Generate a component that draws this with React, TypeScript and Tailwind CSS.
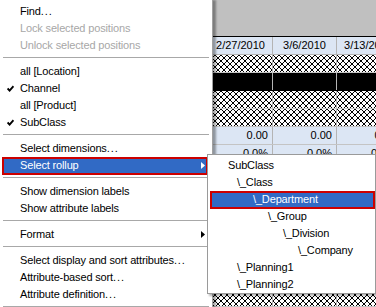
import React from "react";

type Entry =
  | {
      kind: "item";
      label: string;
      disabled?: boolean;
      checked?: boolean;
      submenu?: boolean;
      active?: boolean;
    }
  | { kind: "sep" };

const mainMenu: Entry[] = [
  { kind: "item", label: "Find..." },
  { kind: "item", label: "Lock selected positions", disabled: true },
  { kind: "item", label: "Unlock selected positions", disabled: true },
  { kind: "sep" },
  { kind: "item", label: "all [Location]" },
  { kind: "item", label: "Channel", checked: true },
  { kind: "item", label: "all [Product]" },
  { kind: "item", label: "SubClass", checked: true },
  { kind: "sep" },
  { kind: "item", label: "Select dimensions..." },
  { kind: "item", label: "Select rollup", submenu: true, active: true },
  { kind: "sep" },
  { kind: "item", label: "Show dimension labels" },
  { kind: "item", label: "Show attribute labels" },
  { kind: "sep" },
  { kind: "item", label: "Format", submenu: true },
  { kind: "sep" },
  { kind: "item", label: "Select display and sort attributes..." },
  { kind: "item", label: "Attribute-based sort..." },
  { kind: "item", label: "Attribute definition..." },
  { kind: "sep" },
  { kind: "item", label: "Print..." },
];

const rollups = [
  { label: "SubClass", indent: "pl-[20px]" },
  { label: "\\_Class", indent: "pl-[29px]" },
  { label: "\\_Department", indent: "pl-[45px]", active: true },
  { label: "\\_Group", indent: "pl-[60px]" },
  { label: "\\_Division", indent: "pl-[75px]" },
  { label: "\\_Company", indent: "pl-[90px]" },
  { label: "\\_Planning1", indent: "pl-[29px]" },
  { label: "\\_Planning2", indent: "pl-[29px]" },
];

const dates = ["2/20/2010", "2/27/2010", "3/6/2010", "3/13/2010"];

type RowKind = "hatch" | "black" | "num" | "pct";
const rows: RowKind[] = [
  "hatch",
  "black",
  "hatch",
  "hatch",
  "num",
  "pct",
  "hatch",
  "hatch",
  "hatch",
  "hatch",
  "hatch",
  "hatch",
  "hatch",
  "hatch",
];

// diagonal cross hatch, 6px diamonds
const hatch =
  "bg-white bg-[size:6px_6px] bg-[image:linear-gradient(45deg,transparent_45%,#000_45%,#000_55%,transparent_55%),linear-gradient(-45deg,transparent_45%,#000_45%,#000_55%,transparent_55%)]";

function Label({ text }: { text: string }) {
  // Tahoma's dots are wider than Arial's
  if (text.endsWith("...")) {
    return (
      <span className="whitespace-nowrap">
        {text.slice(0, -3)}
        <span className="tracking-[0.9px]">...</span>
      </span>
    );
  }
  return <span className="whitespace-nowrap">{text}</span>;
}

function Arrow({ white }: { white?: boolean }) {
  return (
    <svg width="4" height="7" viewBox="0 0 4 7" className="mr-[7px] ml-auto">
      <path d="M0 0 L4 3.5 L0 7 Z" fill={white ? "#fff" : "#000"} />
    </svg>
  );
}

function Check() {
  return (
    <svg width="7" height="7" viewBox="0 0 7 7">
      <path d="M0.6 3.4 L2.6 5.6 L6.5 1.2" fill="none" stroke="#000" strokeWidth="1.9" />
    </svg>
  );
}

function Grid() {
  return (
    <div className="font-['Liberation_Sans',Arial,sans-serif] text-[11px] text-black">
      <div className="h-[37px] border-b border-black bg-[#c0c0c0]" />
      <div className="flex h-[18px] border-b border-[#b4b4b4] bg-[#dce6f4] pl-[145px]">
        {dates.map((d) => (
          <div
            key={d}
            className="flex w-[64px] shrink-0 items-center justify-center border-r border-[#b4b4b4]"
          >
            {d}
          </div>
        ))}
      </div>
      {rows.map((kind, i) => (
        <div
          key={i}
          className={`flex h-[18px] border-b pl-[145px] ${
            kind === "black" ? "border-black bg-black" : "border-[#c4c4c4] bg-white"
          }`}
        >
          {dates.map((d) => (
            <div
              key={d}
              className={`flex w-[64px] shrink-0 items-center justify-end border-r border-[#b4b4b4] pr-[4px] ${
                kind === "hatch"
                  ? hatch
                  : kind === "black"
                    ? "bg-black"
                    : "bg-[#dce6f4]"
              }`}
            >
              {kind === "num" ? "0.00" : kind === "pct" ? "0.0%" : ""}
            </div>
          ))}
        </div>
      ))}
    </div>
  );
}

function MainMenu() {
  return (
    <div className="absolute left-0 top-0 w-[213px] border-r border-[#a0a0a0] bg-white pt-[2px] shadow-[3px_0_2px_rgba(0,0,0,0.35)] font-['Liberation_Sans',Arial,sans-serif] text-[11px] tracking-[-0.15px]">
      {mainMenu.map((e, i) =>
        e.kind === "sep" ? (
          <div key={i} className="flex h-[9px] items-center px-[3px]">
            <div className="h-px w-full bg-[#a8a8a8]" />
          </div>
        ) : (
          <div key={i} className="relative flex h-[17px] items-center">
            {e.active && (
              <div className="absolute bottom-[-2px] left-[2px] right-[4px] top-[1px] border-2 border-[#cc0000] bg-[#316ac5]" />
            )}
            <div
              className={`relative flex h-full w-full items-center pt-[2px] ${
                e.active ? "text-white" : e.disabled ? "text-[#a7a7a7]" : "text-black"
              }`}
            >
              <span className="flex w-[20px] shrink-0 pl-[7px]">{e.checked && <Check />}</span>
              <Label text={e.label} />
              {e.submenu && <Arrow white={e.active} />}
            </div>
          </div>
        )
      )}
    </div>
  );
}

function RollupMenu() {
  return (
    <div className="absolute left-[207px] top-[154px] h-[140px] w-[169px] border border-[#9a9a9a] bg-white pt-px shadow-[2px_2px_2px_rgba(0,0,0,0.3)] font-['Liberation_Sans',Arial,sans-serif] text-[11px] tracking-[-0.15px]">
      {rollups.map((r) => (
        <div key={r.label} className="relative flex h-[17px] items-center pt-[2px]">
          {r.active && (
            <div className="absolute bottom-[-2px] left-[2px] right-0 top-[1px] border-2 border-[#cc0000] bg-[#316ac5]" />
          )}
          <span
            className={`relative whitespace-nowrap ${r.indent} ${
              r.active ? "text-white" : "text-black"
            }`}
          >
            {r.label}
          </span>
        </div>
      ))}
    </div>
  );
}

export default function App() {
  return (
    <div className="relative h-[307px] w-[376px] overflow-hidden bg-[#c0c0c0]">
      <Grid />
      <MainMenu />
      <RollupMenu />
    </div>
  );
}
